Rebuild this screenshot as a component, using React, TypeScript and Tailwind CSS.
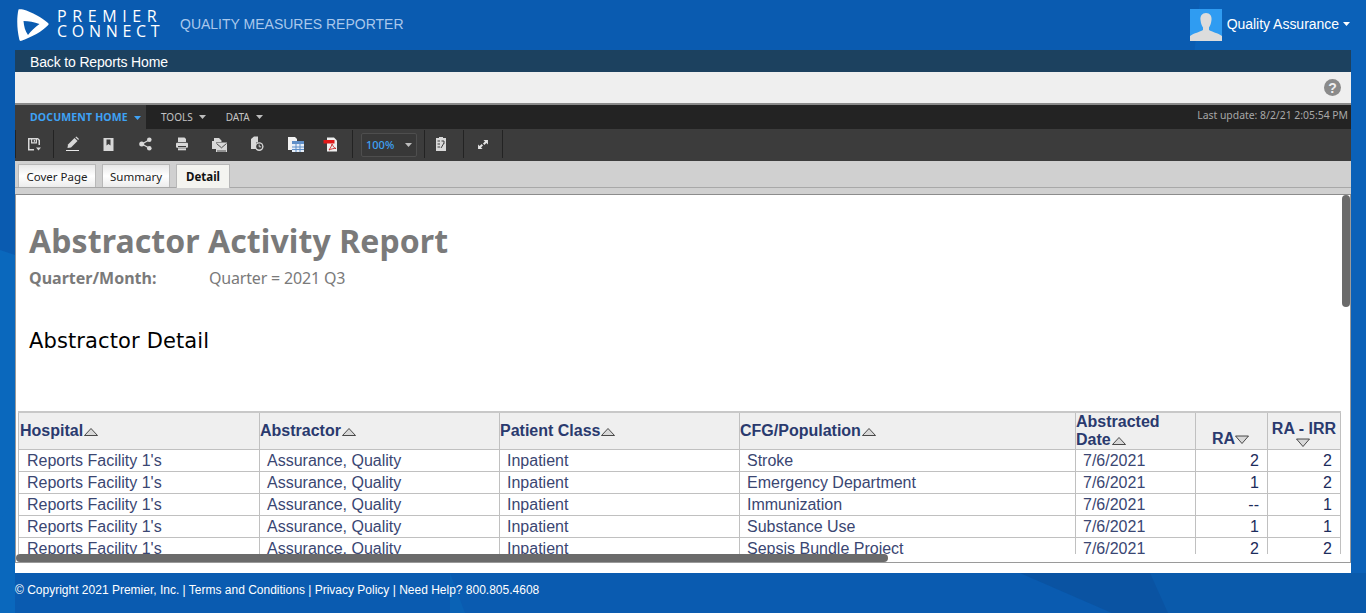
import React from "react";

const rows = [
  ["Stroke", "2", "2"],
  ["Emergency Department", "1", "2"],
  ["Immunization", "--", "1"],
  ["Substance Use", "1", "1"],
  ["Sepsis Bundle Project", "2", "2"],
];

const Up = () => (
  <svg width="14" height="10" viewBox="0 0 14 10" className="inline-block align-[-1px] ml-[1px]">
    <path d="M0.5 8.5 L7 1.5 L13.5 8.5 Z" fill="#d8d8d8" stroke="#222" strokeWidth="0.8" />
  </svg>
);
const Down = () => (
  <svg width="14" height="10" viewBox="0 0 14 10" className="inline-block align-[-1px]">
    <path d="M0.5 1 L7 8.5 L13.5 1 Z" fill="#d8d8d8" stroke="#222" strokeWidth="0.8" />
  </svg>
);
const Caret = ({ c = "#bdbdbd" }: { c?: string }) => (
  <svg width="7" height="4" viewBox="0 0 7 4"><path d="M0 0H7L3.5 4Z" fill={c} /></svg>
);

const Sep = () => <div className="mb-[2px] h-[28px] w-px shrink-0 bg-[#232323]" />;
const Cell = ({ w, children }: { w: string; children?: React.ReactNode }) => (
  <div className={`flex shrink-0 items-center justify-center pb-[2px] ${w}`}>{children}</div>
);

const Save = () => (
  <svg width="15" height="15" viewBox="0 0 15 15"><path fillRule="evenodd" d="M1 1H11L13 3V8H11.5V3.6L10.6 2.5H10V6.5H4V2.5H2.5V12H7V13.5H1ZM5.2 2.5V5.3H8.8V2.5Z" fill="#d8d8d8" /><rect x="6.8" y="3" width="1.3" height="1.8" fill="#d8d8d8" /><path d="M9 10.5H14L11.5 13.5Z" fill="#d8d8d8" /></svg>
);
const Pencil = () => (
  <svg width="15" height="16" viewBox="0 0 15 16"><path d="M3 8.5L9.5 2L12.5 5L6 11.5L2.5 12Z" fill="#d8d8d8" /><path d="M10.3 1.2L11.3 0.4L14 3L13.2 4Z" fill="#d8d8d8" /><rect x="1" y="14" width="13" height="1" fill="#e8e8e8" /></svg>
);
const Bookmark = () => (
  <svg width="11" height="13" viewBox="0 0 11 13"><path fillRule="evenodd" d="M0.5 0H10.5V13H0.5ZM3.5 1.5V7.5L5.5 6L7.5 7.5V1.5Z" fill="#d8d8d8" /></svg>
);
const Share = () => (
  <svg width="13" height="14" viewBox="0 0 13 14"><path d="M10 3L3 7L10 11" stroke="#d8d8d8" strokeWidth="1.2" fill="none" /><circle cx="10.3" cy="2.8" r="2.3" fill="#d8d8d8" /><circle cx="2.7" cy="7" r="2.5" fill="#d8d8d8" /><circle cx="10.3" cy="11.2" r="2.3" fill="#d8d8d8" /></svg>
);
const Printer = () => (
  <svg width="14" height="14" viewBox="0 0 14 14"><path fillRule="evenodd" d="M3 0.5H9.5L11 2V5H3Z" fill="#d8d8d8" /><rect x="1" y="5.8" width="12" height="5" rx="1" fill="#d8d8d8" /><rect x="3" y="9" width="8" height="1" fill="#3c3c3c" /><rect x="3" y="11.3" width="8" height="2" fill="#d8d8d8" /></svg>
);
const Mail = () => (
  <svg width="16" height="15" viewBox="0 0 16 15"><path d="M1 4H3V1H8L10.5 3.5V5H5V12H1Z" fill="#d8d8d8" /><path d="M5 5.5H16V15H5Z" fill="#d8d8d8" /><path d="M5.5 6.5L10.5 10.8L15.5 6.5M6 14H15" stroke="#3c3c3c" strokeWidth="0.9" fill="none" /></svg>
);
const Clock = () => (
  <svg width="15" height="16" viewBox="0 0 15 16"><path d="M2 3L5 0.5H9V6.5H7V13H2Z" fill="#d8d8d8" /><circle cx="10.2" cy="10.6" r="4.3" fill="#d8d8d8" /><circle cx="10.2" cy="10.6" r="3" fill="#3c3c3c" /><path d="M10.2 8.6V10.8H12.2" stroke="#d8d8d8" strokeWidth="1" fill="none" /></svg>
);
const Excel = () => (
  <svg width="17" height="16" viewBox="0 0 17 16"><path d="M1 1H8L10 3V5H5V14H1Z" fill="#f2f2f2" /><rect x="5" y="5" width="12" height="11" fill="#e6eef8" /><rect x="5" y="5" width="12" height="3" fill="#5f8fc8" /><path d="M5 11H17M5 13.5H17M9 8V16M13 8V16" stroke="#5f8fc8" strokeWidth="1" /></svg>
);
const Pdf = () => (
  <svg width="15" height="15" viewBox="0 0 15 15"><path d="M4 0.5H11L14 3.5V14.5H4Z" fill="#efefef" /><rect x="0.5" y="3" width="11" height="3.5" fill="#e01818" /><path d="M6 13C8 10 9 8 9 7C10 9 11 11 13 11.5C11 11.2 8 12 6 13Z" fill="none" stroke="#cc2020" strokeWidth="0.9" /></svg>
);
const Book = () => (
  <svg width="12" height="14" viewBox="0 0 12 14"><path fillRule="evenodd" d="M1 1H4V0H8V1H11V14H1Z" fill="#d8d8d8" /><path d="M2.5 4H5M2.5 7H5M2.5 10H5M6 11L9 6" stroke="#3c3c3c" strokeWidth="1" /><path d="M6.5 4H9V6.5" stroke="#3c3c3c" strokeWidth="1" fill="none" /></svg>
);
const Expand = () => (
  <svg width="10" height="9" viewBox="0 0 11 10"><path d="M6 0H11V5L9.3 3.3L7 5.5L5.5 4L7.7 1.7Z" fill="#e4e4e4" /><path d="M0 10V5L1.7 6.7L4 4.5L5.5 6L3.3 8.3L5 10Z" fill="#e4e4e4" /></svg>
);

const thBase = "border-x border-[#c0c0c0] bg-[#efefef] p-0 font-bold text-[16px] leading-[18px] text-[#2a3a6e]";
const th = thBase + " text-left";
const td = "border border-[#c0c0c0] h-[22px] p-0 pl-[7px] text-[16px] leading-[18px] text-[#3a4672] whitespace-nowrap";
const tdn = "border border-[#c0c0c0] h-[22px] p-0 pr-[8px] text-right text-[16px] leading-[18px] text-[#1c2c5c]";

export default function App() {
  return (
    <div className="relative h-[613px] w-full overflow-hidden bg-[#0a5bb0] font-['Liberation_Sans',sans-serif]">
      <svg className="absolute inset-0" width="1366" height="613" viewBox="0 0 1366 613">
        <path d="M1200 0H1366V613H1165L1140 550Z" fill="#0b61b8" />
        <path d="M0 420L15 410V613H0Z" fill="#0a68bd" />
        <path d="M0 250L15 255V500L0 520Z" fill="#0a68bd" />
        <path d="M1020 573L1112 613H1366V573Z" fill="#0a5aab" />
        <path d="M1020 573H1150L1168 613H1112Z" fill="#0a53a2" />
        <path d="M450 573V613H465Z" fill="#0a62b5" />
      </svg>

      <div className="relative flex h-full flex-col">
        <header className="flex h-[50px] shrink-0 items-center pb-[2px] pl-[17px] pr-[16px]">
          <svg width="32" height="32" viewBox="0 0 32 32" className="mt-[2px] shrink-0">
            <path fillRule="evenodd" d="M1.5 0.5C2 0 4 0 6 0.5C15 3 25 8.5 31 14C31.8 14.8 31.8 15.6 31 16.3C25 22.5 15 28 4.5 31.8C3 32.2 2.5 31.5 2.2 30C0 21 -0.5 9 1.5 0.5ZM6.5 12C7 17 8 22 11 26C14 22 18 18 22.5 15C17 13 12 12 6.5 12Z" fill="#ffffff" />
          </svg>
          <div className="ml-[8px] flex w-[108px] shrink-0 flex-col whitespace-nowrap font-['Open_Sans',sans-serif] text-[16px] leading-[15px] tracking-[5.6px] text-white">
            <span className="font-normal">PREMIER</span>
            <span className="font-normal tracking-[4.7px]">CONNECT</span>
          </div>
          <span className="ml-[15px] text-[14px] text-[#a9c8ec]">QUALITY MEASURES REPORTER</span>
          <div className="ml-auto flex items-center">
            <div className="mt-[2px] flex h-[32px] w-[32px] items-end justify-center overflow-hidden bg-[#2f9cf2]">
              <svg width="32" height="32" viewBox="0 0 32 32">
                <path d="M16 4C12 4 10 7 10.5 11C11 15 12 17 13 18.5V21C10 23 4 24 0 27V32H32V27C28 24 22 23 19 21V18.5C20 17 21 15 21.5 11C22 7 20 4 16 4Z" fill="#dcdcdc" />
              </svg>
            </div>
            <span className="ml-[5px] text-[14px] tracking-[-0.03px] text-white">Quality Assurance</span>
            <span className="ml-[4px]"><Caret c="#ffffff" /></span>
          </div>
        </header>

        <main className="mx-[15px] flex flex-col bg-white">
          <div className="flex h-[22px] items-center bg-[#1c415f] pl-[15px] pt-[2px] text-[14px] tracking-[-0.15px] text-white">Back to Reports Home</div>
          <div className="flex h-[31px] items-center justify-end bg-[#efefef] pr-[10px]">
            <div className="flex h-[17px] w-[17px] items-center justify-center rounded-full bg-[#8a8a8a] text-[14px] font-bold leading-none text-[#efefef]">?</div>
          </div>
          <div className="h-[2px] bg-[#8a8a8a]" />

          <div className="flex h-[24px] items-center bg-[#232323] font-['Noto_Sans',sans-serif] text-[10px] text-[#c4c4c4]">
            <div className="flex h-full w-[131px] items-center bg-[#3c3c3c] pl-[15px] pt-[1px] font-bold text-[#3ea2f5]">
              <span className="text-[10.5px] tracking-[0.15px]">DOCUMENT HOME</span>
              <span className="ml-[6px]"><Caret c="#3ea2f5" /></span>
            </div>
            <span className="ml-[15px]">TOOLS</span>
            <span className="ml-[6px]"><Caret /></span>
            <span className="ml-[20px]">DATA</span>
            <span className="ml-[6px]"><Caret /></span>
            <span className="ml-auto pb-[3px] pr-[3px] text-[10.4px] text-[#a8a8a8]">Last update: 8/2/21 2:05:54 PM</span>
          </div>

          <div className="flex h-[32px] items-center bg-[#3c3c3c]">
            <Sep />
            <Cell w="w-[37px]"><Save /></Cell>
            <Sep />
            <Cell w="w-[36px]"><Pencil /></Cell>
            <Cell w="w-[37px]"><Bookmark /></Cell>
            <Cell w="w-[36px]"><Share /></Cell>
            <Cell w="w-[37px]"><Printer /></Cell>
            <Cell w="w-[37px]"><Mail /></Cell>
            <Cell w="w-[39px]"><Clock /></Cell>
            <Cell w="w-[38px]"><Excel /></Cell>
            <Cell w="w-[33px]"><Pdf /></Cell>
            <div className="ml-[5px]"><Sep /></div>
            <div className="ml-[8px] flex h-[24px] w-[56px] items-center rounded-[2px] border border-[#4e4e4e] bg-[#383838] font-['Noto_Sans',sans-serif] text-[11px] font-medium text-[#3ea2f5]">
              <span className="pl-[4px]">100%</span>
              <span className="ml-auto pr-[4px]"><Caret /></span>
            </div>
            <div className="ml-[7px]"><Sep /></div>
            <Cell w="w-[38px] pr-[6px]"><Book /></Cell>
            <Sep />
            <Cell w="w-[38px]"><Expand /></Cell>
            <Sep />
          </div>

          <div className="flex h-[27px] items-end gap-[6px] border-b border-[#a8a8a8] bg-[#d0d0d0] pl-[3px] font-['Noto_Sans',sans-serif] text-[11.5px]">
            <div className="flex h-[23px] w-[78px] items-center justify-center border border-b-0 border-[#b8b8b8] bg-gradient-to-b from-[#e8e8e8] via-white to-[#ececec] pt-[2px] text-[#222]">Cover Page</div>
            <div className="flex h-[23px] w-[68px] items-center justify-center border border-b-0 border-[#b8b8b8] bg-gradient-to-b from-[#e8e8e8] via-white to-[#ececec] pt-[2px] text-[#222]">Summary</div>
            <div className="flex h-[24px] w-[54px] translate-y-px items-center justify-center border border-b-0 border-[#b8b8b8] bg-[#f4f4f0] pt-[1px] font-bold text-[#111]">Detail</div>
          </div>
          <div className="h-[7px] border-b border-[#8c8c8c] bg-[#d0d0d0]" />

          <div className="relative h-[368px] overflow-hidden border-x border-b border-[#9a9a9a]">
            <div className="h-[359px] overflow-hidden">
              <h1 className="pl-[13px] pt-[27px] font-['Noto_Sans',sans-serif] text-[32px] font-bold leading-[38px] tracking-[0.08px] text-[#7a7a7a]">Abstractor Activity Report</h1>
              <div className="mt-[9px] flex pl-[13px] font-['Noto_Sans',sans-serif] text-[16px] leading-[18px] text-[#7a7a7a]">
                <span className="w-[180px] font-bold">Quarter/Month:</span>
                <span className="tracking-[-0.18px]">Quarter = 2021 Q3</span>
              </div>
              <h2 className="mt-[41px] pl-[13px] font-['DejaVu_Sans',sans-serif] text-[21px] font-normal leading-[26px] tracking-[0.12px] text-black">Abstractor Detail</h2>
              <div className="ml-[2px] mt-[57px] w-[1322px]">
                <table className="w-[1322px] table-fixed border-collapse border-t-2 border-[#c8c8c8] font-['Liberation_Sans',sans-serif]">
                  <colgroup>
                    <col className="w-[241px]" />
                    <col className="w-[240px]" />
                    <col className="w-[240px]" />
                    <col className="w-[336px]" />
                    <col className="w-[120px]" />
                    <col className="w-[72px]" />
                    <col className="w-[73px]" />
                  </colgroup>
                  <thead>
                    <tr className="h-[37px] border-b border-[#c0c0c0]">
                      <th className={th + " pl-[1px]"}>Hospital<Up /></th>
                      <th className={th}>Abstractor<Up /></th>
                      <th className={th}>Patient Class<Up /></th>
                      <th className={th}>CFG/Population<Up /></th>
                      <th className={th}>Abstracted<br />Date<Up /></th>
                      <th className={thBase + " pb-[1px] pr-[2px] text-center align-bottom"}>RA<Down /></th>
                      <th className={thBase + " pt-[3px] text-center"}>RA - IRR<br /><span className="block h-[8px] pr-[3px] leading-[6px]"><Down /></span></th>
                    </tr>
                  </thead>
                  <tbody>
                    {rows.map((r) => (
                      <tr key={r[0]}>
                        <td className={td}><span className="ml-px">Reports Facility 1's</span></td>
                        <td className={td}>Assurance, Quality</td>
                        <td className={td}>Inpatient</td>
                        <td className={td}>{r[0]}</td>
                        <td className={td}>7/6/2021</td>
                        <td className={tdn}>{r[1]}</td>
                        <td className={tdn}>{r[2]}</td>
                      </tr>
                    ))}
                  </tbody>
                </table>
              </div>
            </div>
            <div className="absolute left-0 top-[359px] h-[8px] w-[872px] rounded-[4px] bg-[#6b6b6b]" />
            <div className="absolute right-0 top-0 h-[112px] w-[8px] rounded-[4px] bg-[#6b6b6b]" />
          </div>
          <div className="h-[10px] bg-white" />
        </main>

        <footer className="flex flex-1 items-center pb-[6px] pl-[15px] text-[12px] text-white">
          © Copyright 2021 Premier, Inc. | Terms and Conditions | Privacy Policy | Need Help? 800.805.4608
        </footer>
      </div>
    </div>
  );
}
